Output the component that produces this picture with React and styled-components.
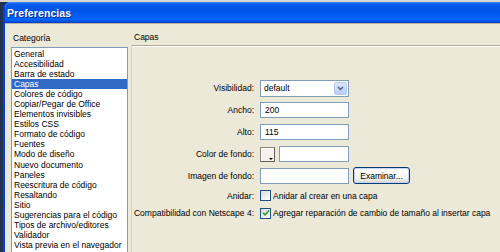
import React from 'react'
import styled, { createGlobalStyle } from 'styled-components'

const GlobalStyle = createGlobalStyle`
  html, body {
    margin: 0;
    padding: 0;
    width: 500px;
    height: 252px;
    overflow: hidden;
    background: linear-gradient(#d8d6d0 0 2px, #22324f 2px);
    font-family: "Liberation Sans", Arial, sans-serif;
  }
`;

const Window = styled.div`
  margin: 2px 0 0 3px;
  height: 250px;
  display: flex;
  flex-direction: column;
  border-left: 2px solid #0840d6;
  border-top-left-radius: 7px;
  overflow: hidden;
  background: #ece9d8;
`;

const TitleBar = styled.div`
  height: 21px;
  flex: none;
  display: flex;
  align-items: center;
  padding-left: 2px;
  color: #fff;
  font-weight: bold;
  font-size: 10.5px;
  letter-spacing: 0.1px;
  text-shadow: 1px 1px 0 #0a2a8a;
  background: linear-gradient(
    #3d8dff 0,
    #0a5cec 2px,
    #0055e5 8px,
    #0058ee 12px,
    #0066ff 18px,
    #0048d8 20px,
    #0038c0 21px
  );
  border-bottom: 1px solid #b8b4a4;
`;

const Body = styled.div`
  flex: 1;
  display: flex;
  padding-left: 6px;
  font-size: 8.5px;
  color: #000;
`;

const LeftColumn = styled.div`
  width: 117px;
  display: flex;
  flex-direction: column;
  padding-top: 9px;
`;

const Caption = styled.div`
  height: 10px;
  line-height: 10px;
  padding-left: ${(p) => p.$indent || 2}px;
`;

const List = styled.ul`
  list-style: none;
  margin: 4px 0 0;
  padding: 1px 0 0;
  flex: 1;
  background: #fff;
  border: 1px solid #7f9db9;
  border-bottom: none;
`;

const Item = styled.li`
  height: 10.05px;
  line-height: 10.05px;
  padding-left: 2px;
  white-space: nowrap;
  background: ${(p) => (p.$selected ? '#316ac5' : 'transparent')};
  color: ${(p) => (p.$selected ? '#fff' : '#000')};
`;

const RightColumn = styled.div`
  flex: 1;
  display: flex;
  flex-direction: column;
  margin-left: 3px;
  padding-top: 8px;
`;

const Group = styled.div`
  flex: 1;
  margin-top: 3px;
  border-top: 1px solid #aca899;
  border-left: 1px solid #d6d2c2;
  box-shadow: inset 0 1px 0 #fff;
  padding-top: 31px;
`;

const Form = styled.div`
  display: grid;
  grid-template-columns: 122px auto;
  grid-template-rows: 22px 22px 22px 22px 21px 19px 16px;
  column-gap: 6px;
  align-items: center;
`;

const Label = styled.div`
  text-align: right;
  white-space: nowrap;
`;

const Controls = styled.div`
  display: flex;
  align-items: center;
  gap: ${(p) => p.$gap || 4}px;
  white-space: nowrap;
`;

const Select = styled.div`
  box-sizing: border-box;
  width: 89px;
  height: 17px;
  border: 1px solid #7f9db9;
  background: #fff;
  display: flex;
  align-items: center;
  justify-content: space-between;
  padding: 0 1px 0 3px;
`;

const DropButton = styled.div`
  box-sizing: border-box;
  width: 13px;
  height: 13px;
  border: 1px solid #b8cbf5;
  border-radius: 2px;
  background: linear-gradient(#dce6fc, #b8cdf8);
  display: flex;
  align-items: center;
  justify-content: center;
`;

const TextBox = styled.div`
  box-sizing: border-box;
  width: ${(p) => p.$width || 89}px;
  height: 16px;
  border: 1px solid #7f9db9;
  background: #fff;
  line-height: 14px;
  padding-left: 4px;
`;

const Swatch = styled.div`
  position: relative;
  box-sizing: border-box;
  width: 15px;
  height: 15px;
  background: #f4f2ea;
  border: 1px solid;
  border-color: #8a877c #5f5d55 #5f5d55 #8a877c;
  box-shadow: inset 1px 1px 0 #fff;

  &::after {
    content: '';
    position: absolute;
    right: 1px;
    bottom: 1px;
    border-left: 2px solid transparent;
    border-right: 2px solid transparent;
    border-top: 2px solid #000;
  }
`;

const Button = styled.div`
  box-sizing: border-box;
  width: 57px;
  height: 17px;
  border: 1px solid #003c74;
  border-radius: 3px;
  background: linear-gradient(#ffffff, #f3f2ec 70%, #d8d4c6);
  box-shadow: inset 0 0 0 1px #c3d3fd;
  display: flex;
  align-items: center;
  justify-content: center;
`;

const Check = styled.div`
  box-sizing: border-box;
  width: 11px;
  height: 11px;
  border: 1px solid #1c5180;
  background: linear-gradient(135deg, #dcdcd6, #ffffff);
  display: flex;
  align-items: center;
  justify-content: center;
`;

const categories = [
  'General',
  'Accesibilidad',
  'Barra de estado',
  'Capas',
  'Colores de código',
  'Copiar/Pegar de Office',
  'Elementos invisibles',
  'Estilos CSS',
  'Formato de código',
  'Fuentes',
  'Modo de diseño',
  'Nuevo documento',
  'Paneles',
  'Reescritura de código',
  'Resaltando',
  'Sitio',
  'Sugerencias para el código',
  'Tipos de archivo/editores',
  'Validador',
  'Vista previa en el navegador',
];

const Chevron = () => (
  <svg width="7" height="5" viewBox="0 0 7 5">
    <path d="M1 1 L3.5 3.5 L6 1" fill="none" stroke="#4d6185" strokeWidth="1.4" />
  </svg>
);

const Tick = () => (
  <svg width="8" height="8" viewBox="0 0 8 8">
    <path d="M1 3.8 L3 5.8 L7 1.5" fill="none" stroke="#21a121" strokeWidth="1.6" />
  </svg>
);

const App = () => {
  const selected = 'Capas';
  return (
    <>
      <GlobalStyle />
      <Window>
        <TitleBar>Preferencias</TitleBar>
        <Body>
          <LeftColumn>
            <Caption>Categoría</Caption>
            <List>
              {categories.map((c) => (
                <Item key={c} $selected={c === selected}>{c}</Item>
              ))}
            </List>
          </LeftColumn>
          <RightColumn>
            <Caption $indent={3}>Capas</Caption>
            <Group>
              <Form>
                <Label>Visibilidad:</Label>
                <Controls>
                  <Select>
                    default
                    <DropButton><Chevron /></DropButton>
                  </Select>
                </Controls>

                <Label>Ancho:</Label>
                <Controls><TextBox>200</TextBox></Controls>

                <Label>Alto:</Label>
                <Controls><TextBox>115</TextBox></Controls>

                <Label>Color de fondo:</Label>
                <Controls $gap={4}>
                  <Swatch />
                  <TextBox $width={70} />
                </Controls>

                <Label>Imagen de fondo:</Label>
                <Controls>
                  <TextBox />
                  <Button>Examinar...</Button>
                </Controls>

                <Label>Anidar:</Label>
                <Controls $gap={2}>
                  <Check />
                  Anidar al crear en una capa
                </Controls>

                <Label>Compatibilidad con Netscape 4:</Label>
                <Controls $gap={2}>
                  <Check><Tick /></Check>
                  Agregar reparación de cambio de tamaño al insertar capa
                </Controls>
              </Form>
            </Group>
          </RightColumn>
        </Body>
      </Window>
    </>
  );
};

export default App;
